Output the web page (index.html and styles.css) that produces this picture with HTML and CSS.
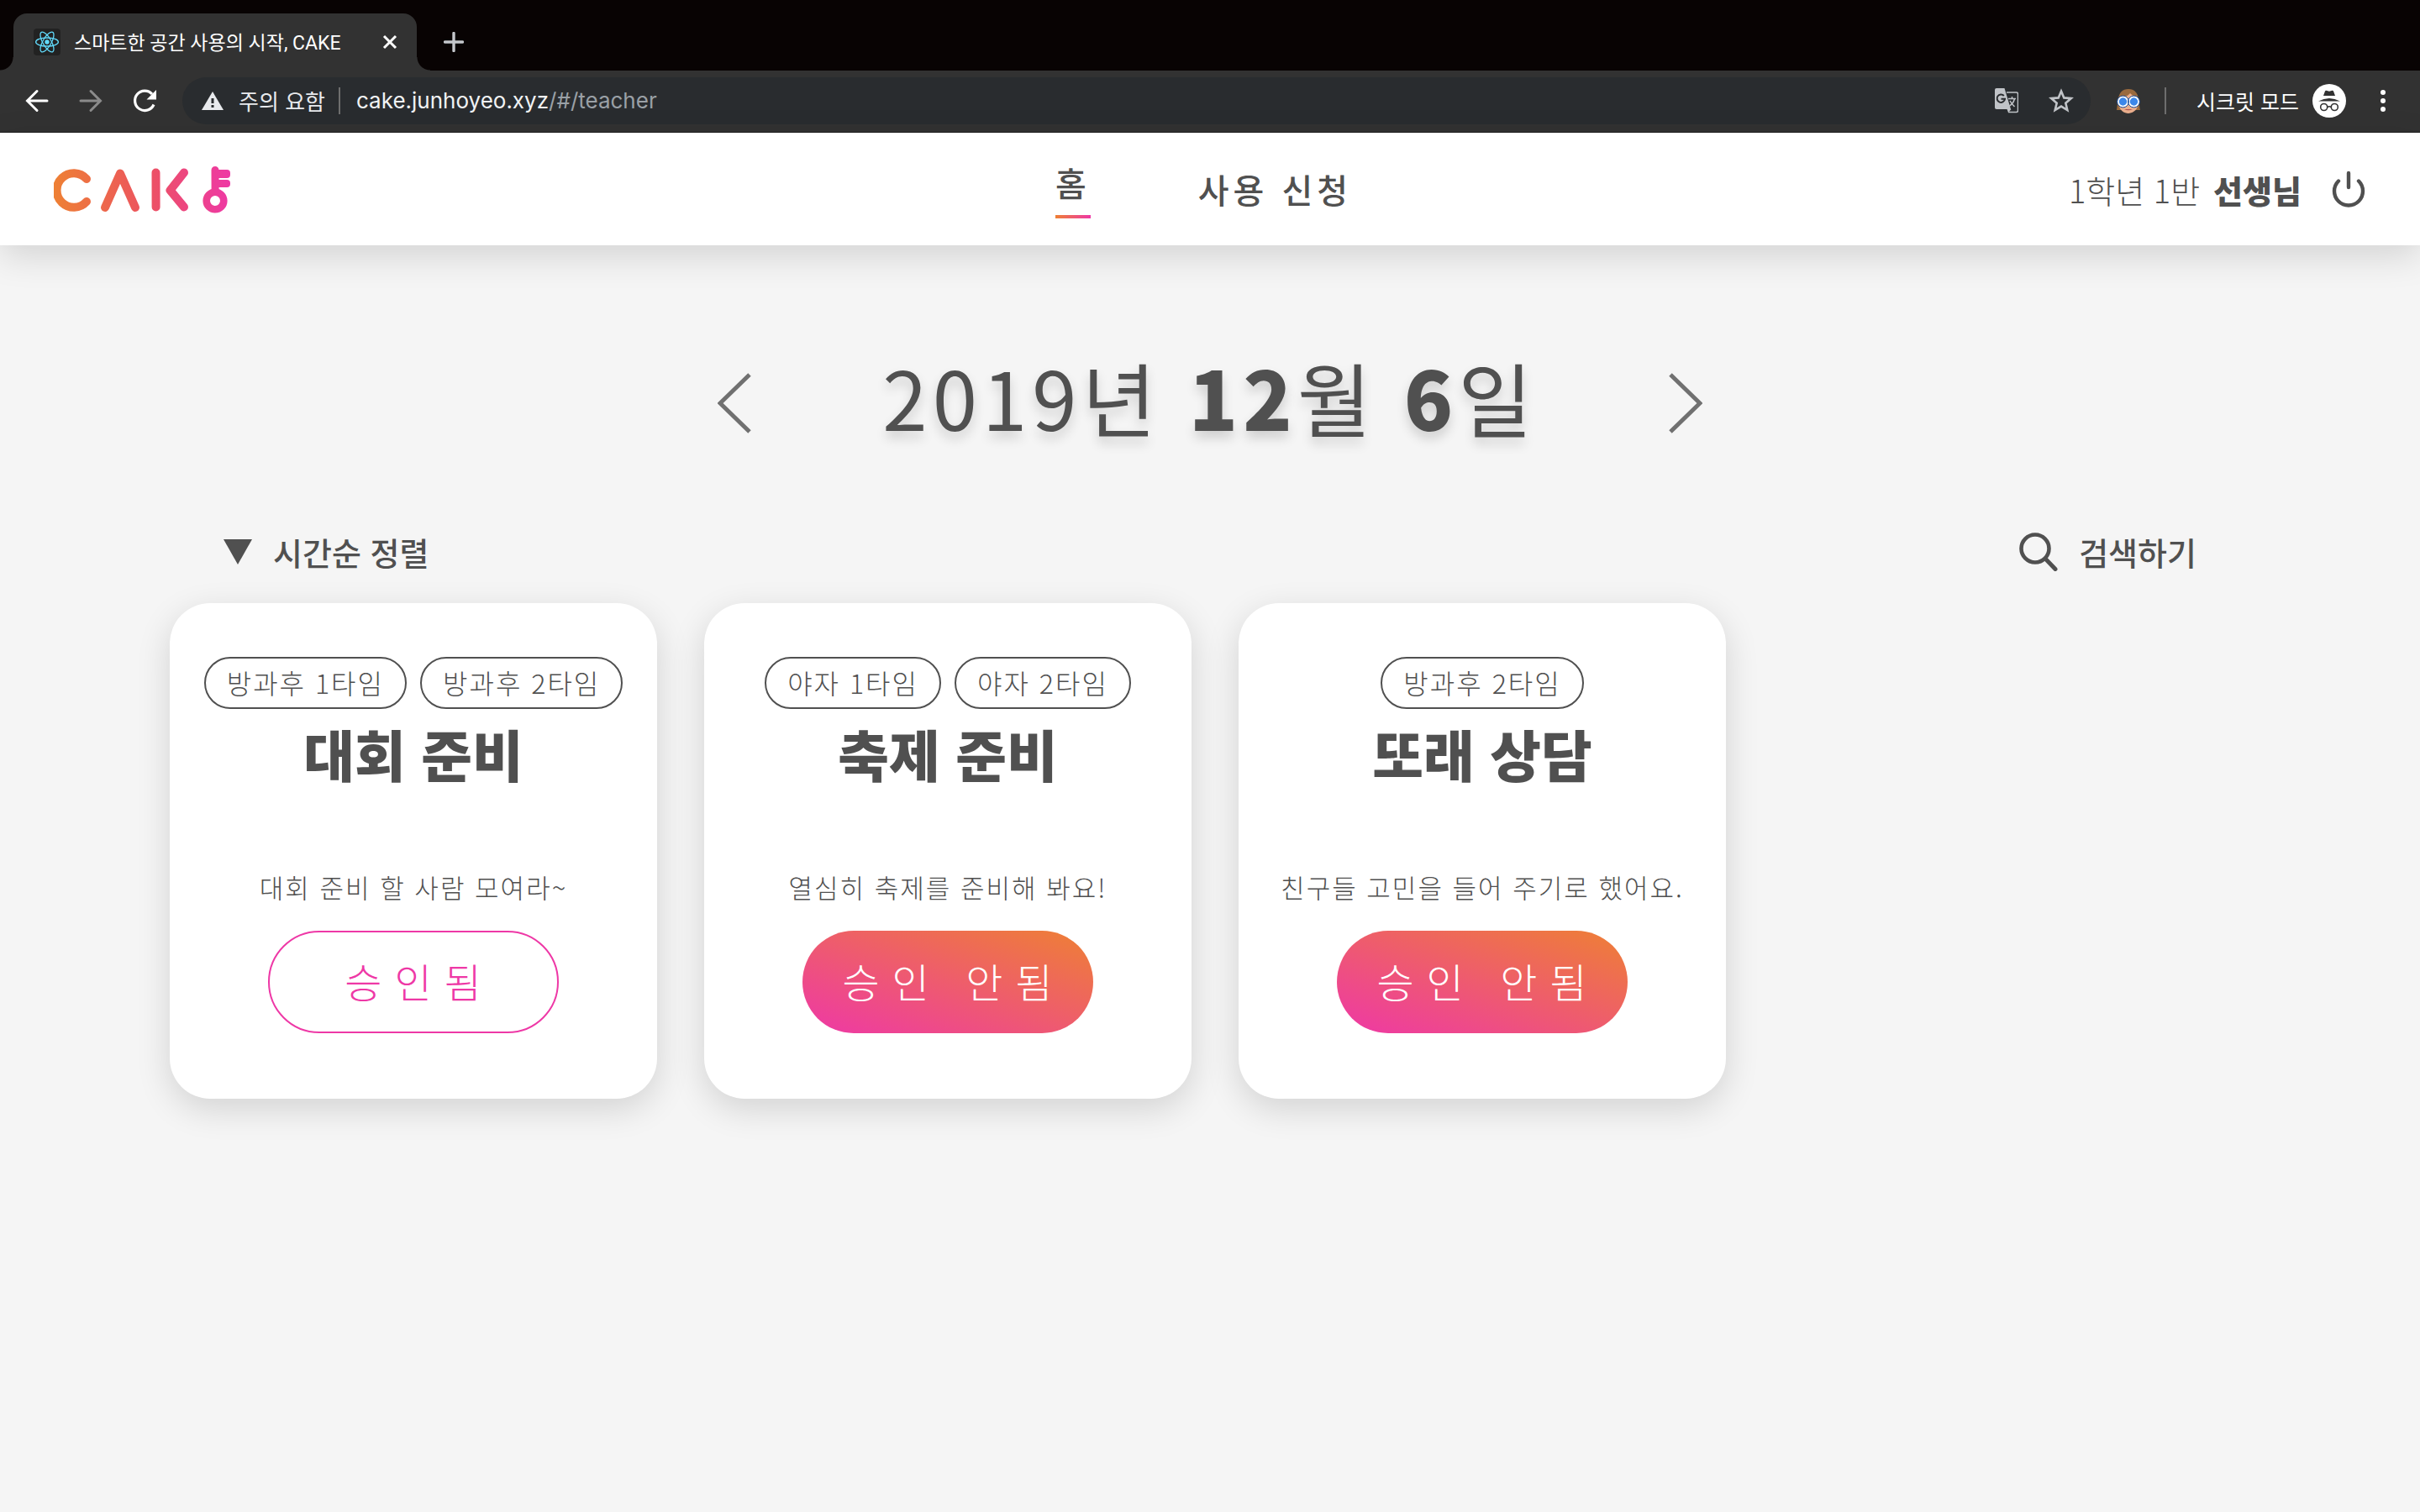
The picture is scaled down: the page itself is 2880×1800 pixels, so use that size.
FILE: index.html
```html
<!DOCTYPE html>
<html lang="ko">
<head>
<meta charset="utf-8">
<meta name="viewport" content="width=device-width, initial-scale=1">
<title>스마트한 공간 사용의 시작, CAKE</title>
<link rel="stylesheet" href="styles.css">
</head>
<body>
<div class="browser">
  <div class="tab-strip">
    <div class="tab">
      <svg class="favicon" viewBox="0 0 32 32" aria-hidden="true">
        <rect width="32" height="32" rx="4" fill="#222"/>
        <g fill="none" stroke="#61dafb" stroke-width="1.3">
          <ellipse cx="16" cy="16" rx="13.4" ry="5"/>
          <ellipse cx="16" cy="16" rx="13.4" ry="5" transform="rotate(60 16 16)"/>
          <ellipse cx="16" cy="16" rx="13.4" ry="5" transform="rotate(120 16 16)"/>
        </g>
        <circle cx="16" cy="16" r="2.7" fill="#61dafb"/>
      </svg>
      <span class="tab-title">스마트한 공간 사용의 시작, CAKE</span>
      <button class="icon-button" aria-label="탭 닫기">
        <svg width="18" height="18" viewBox="0 0 18 18"><path d="M2 2 16 16M16 2 2 16" stroke="#fff" stroke-width="3" fill="none"/></svg>
      </button>
    </div>
    <button class="icon-button" aria-label="새 탭">
      <svg width="24" height="24" viewBox="0 0 24 24"><path d="M12 1.500v21M1.500 12h21" stroke="#c4c7cc" stroke-width="3.400" stroke-linecap="round"/></svg>
    </button>
  </div>
  <div class="toolbar">
    <div class="history">
      <button class="icon-button" aria-label="뒤로">
        <svg width="32" height="32" viewBox="0 0 32 32"><path d="M28 16H5M16 4.500 4.500 16 16 27.500" fill="none" stroke="#fff" stroke-width="3" stroke-linecap="round"/></svg>
      </button>
      <button class="icon-button" aria-label="앞으로">
        <svg width="32" height="32" viewBox="0 0 32 32"><path d="M4 16h23M16 4.500 27.500 16 16 27.500" fill="none" stroke="#8b8b8b" stroke-width="3" stroke-linecap="round"/></svg>
      </button>
      <button class="icon-button" aria-label="새로고침">
        <svg width="32" height="32" viewBox="0 0 32 32"><path d="M27 20.500A11.700 11.700 0 1 1 25 8" fill="none" stroke="#fff" stroke-width="3.200"/><path d="M30 3v11.500h-11.500z" fill="#fff"/></svg>
      </button>
    </div>
    <div class="omnibox">
      <svg width="26" height="22" viewBox="0 0 26 22" aria-hidden="true"><path d="M13 0 26 22H0z" fill="#e8eaed"/><path d="M11.500 8h3v6h-3zM11.500 16h3v3h-3z" fill="#292c2f"/></svg>
      <span class="security">주의 요함</span>
      <span class="bar"></span>
      <span class="url">cake.junhoyeo.xyz<span class="url-path">/#/teacher</span></span>
      <button class="icon-button" aria-label="번역">
        <svg width="28" height="30" viewBox="0 0 28 30">
          <path d="M14 5h11.500a2 2 0 0 1 2 2v19.500a2 2 0 0 1-2 2H16" fill="none" stroke="#c0c3c7" stroke-width="1.500"/>
          <path d="M2 0h9.500L19 25H2a2 2 0 0 1-2-2V2a2 2 0 0 1 2-2z" fill="#c0c3c7"/>
          <path d="M14.500 25h5l-3.500 4z" fill="#c0c3c7"/>
          <path d="M10.800 9A4.700 4.700 0 1 0 12 12.800H7.500" fill="none" stroke="#292c2f" stroke-width="2"/>
          <path d="M16 12.500h9M20.500 10v2.500M23.500 12.500c-1 4-3.500 7-6 8.500M18 15c1.500 3 3.500 5 5.500 7" fill="none" stroke="#c0c3c7" stroke-width="1.500"/>
        </svg>
      </button>
      <button class="icon-button" aria-label="북마크">
        <svg width="30" height="30" viewBox="0 0 30 30"><path d="M15 3.500l3.300 7.900 8.500.7-6.500 5.600 2 8.300-7.300-4.400-7.300 4.400 2-8.300-6.500-5.600 8.500-.7z" fill="none" stroke="#c0c3c7" stroke-width="2.600"/></svg>
      </button>
    </div>
    <svg class="extension" width="28" height="30" viewBox="0 0 28 30" aria-hidden="true">
      <path d="M0 26C2 20-1 1 14 1s12 19 14 25z" fill="#9a6a3e"/>
      <path d="M3 11c6 0 11-2 13-5 2 2 5 4 9 5v9c0 6-6 10-11 10S3 26 3 20z" fill="#e9ae8c"/>
      <circle cx="7.500" cy="16" r="5.700" fill="#3c87ea" stroke="#fff" stroke-width="2"/>
      <circle cx="20.500" cy="16" r="5.700" fill="#3c87ea" stroke="#fff" stroke-width="2"/>
      <circle cx="7.500" cy="16" r="6.900" fill="none" stroke="#1d4f9c"/>
      <circle cx="20.500" cy="16" r="6.900" fill="none" stroke="#1d4f9c"/>
      <path d="M9 25q5 2.500 10 0z" fill="#b4534f"/>
    </svg>
    <span class="bar"></span>
    <div class="incognito">
      <span>시크릿 모드</span>
      <svg width="40" height="40" viewBox="0 0 40 40" aria-hidden="true">
        <circle cx="20" cy="20" r="20" fill="#fff"/>
        <path d="M15 8.500q.5-1 1.500-.7l3.500 1 3.500-1q1-.3 1.500.7L27 14H13z" fill="#323232"/>
        <path d="M7 20.500q13-7 26 0z" fill="#323232"/>
        <g fill="none" stroke="#323232" stroke-width="1.600"><circle cx="13.700" cy="27.500" r="4"/><circle cx="26.300" cy="27.500" r="4"/><path d="M17.700 27.500q2.300-1.500 4.600 0"/></g>
      </svg>
    </div>
    <button class="icon-button" aria-label="메뉴">
      <svg width="6" height="28" viewBox="0 0 6 28"><g fill="#fff"><circle cx="3" cy="4" r="3"/><circle cx="3" cy="14" r="3"/><circle cx="3" cy="24" r="3"/></g></svg>
    </button>
  </div>
</div>

<header class="header">
  <a class="logo" href="#/" aria-label="CAKE">
    <svg width="212" height="58" viewBox="0 -1 212 58">
      <defs><linearGradient id="brand" gradientUnits="userSpaceOnUse" x1="0" y1="0" x2="212" y2="0"><stop offset="0" stop-color="#ee8034"/><stop offset=".52" stop-color="#ec5360"/><stop offset="1" stop-color="#ee38a6"/></linearGradient></defs>
      <g fill="none" stroke="url(#brand)" stroke-width="10" stroke-linecap="round" stroke-linejoin="round">
        <path d="M39 16A20.300 20.300 0 1 0 39 43"/>
        <path d="M61 50 79 9.500 97 50"/>
        <path d="M121.500 8.500 121.600 49.500M155 8.500 138.500 29.500 155 49.500"/>
        <circle cx="192" cy="42" r="10.300" stroke-width="8.600"/>
        <path d="M192 5.500 192.100 30" stroke-width="9"/>
      </g>
      <path d="M192 5h14a4 4 0 0 1 4 4v2a4 4 0 0 1-4 4h-14zM192 17h14a4 4 0 0 1 4 4v1a4 4 0 0 1-4 4h-14z" fill="url(#brand)"/>
    </svg>
  </a>
  <nav class="nav">
    <a class="nav-link nav-link-active" href="#/teacher">홈</a>
    <a class="nav-link" href="#/apply">사용 신청</a>
  </nav>
  <div class="account">
    <span class="account-class">1학년 1반</span>
    <strong class="account-role">선생님</strong>
    <button class="icon-button" aria-label="로그아웃">
      <svg width="40" height="44" viewBox="0 0 40 44"><path d="M8 12.500A17 17 0 1 0 32 12.500M20 3v17" fill="none" stroke="#505050" stroke-width="4.400" stroke-linecap="round"/></svg>
    </button>
  </div>
</header>

<main class="page">
  <div class="date-picker">
    <button class="icon-button date-arrow" aria-label="이전 날">
      <svg width="40" height="72" viewBox="0 0 40 72"><path d="M38 2 3 36 38 70" fill="none" stroke="#707070" stroke-width="5"/></svg>
    </button>
    <h1 class="date">2019년 <b>12</b>월 <b>6</b>일</h1>
    <button class="icon-button date-arrow" aria-label="다음 날">
      <svg width="40" height="72" viewBox="0 0 40 72"><path d="M2 2 37 36 2 70" fill="none" stroke="#707070" stroke-width="5"/></svg>
    </button>
  </div>

  <div class="filters">
    <button class="filter">
      <svg width="34" height="30" viewBox="0 0 34 30"><path d="M0 0h34L17 30z" fill="#505050"/></svg>
      시간순 정렬
    </button>
    <button class="filter">
      <svg width="46" height="46" viewBox="0 0 46 46"><circle cx="19" cy="19" r="16.500" fill="none" stroke="#505050" stroke-width="4.600"/><path d="M31 31 43 43.500" stroke="#505050" stroke-width="5" stroke-linecap="round"/></svg>
      검색하기
    </button>
  </div>

  <section class="cards">
    <article class="card">
      <div class="tags"><span class="tag">방과후 1타임</span><span class="tag">방과후 2타임</span></div>
      <h2 class="card-title">대회 준비</h2>
      <p class="card-text">대회 준비 할 사람 모여라~</p>
      <button class="status status-approved">승인됨</button>
    </article>
    <article class="card">
      <div class="tags"><span class="tag">야자 1타임</span><span class="tag">야자 2타임</span></div>
      <h2 class="card-title">축제 준비</h2>
      <p class="card-text">열심히 축제를 준비해 봐요!</p>
      <button class="status">승인 안됨</button>
    </article>
    <article class="card">
      <div class="tags"><span class="tag">방과후 2타임</span></div>
      <h2 class="card-title">또래 상담</h2>
      <p class="card-text">친구들 고민을 들어 주기로 했어요.</p>
      <button class="status">승인 안됨</button>
    </article>
  </section>
</main>
</body>
</html>
```

FILE: styles.css
```css
* {
  box-sizing: border-box;
}

body {
  margin: 0;
  min-height: 100vh;
  background: #f5f5f5;
  color: #505050;
  font-family: "Noto Sans CJK KR", sans-serif;
}

button {
  padding: 0;
  border: 0;
  background: none;
  color: inherit;
  font: inherit;
  cursor: pointer;
}

svg {
  display: block;
  flex: none;
}

.icon-button {
  flex: none;
}

/* Browser window */

.browser {
  color: #fff;
  font-family: Inter, "Noto Sans CJK KR", sans-serif;
}

.tab-strip {
  display: flex;
  align-items: center;
  gap: 32px;
  height: 84px;
  padding: 16px 16px 0;
  background: #080303;
}

.tab {
  position: relative;
  display: flex;
  align-items: center;
  width: 480px;
  height: 68px;
  padding: 0 23px 0 24px;
  border-radius: 16px 16px 0 0;
  background: #323232;
}

.tab::before,
.tab::after {
  content: "";
  position: absolute;
  bottom: 0;
  width: 16px;
  height: 16px;
}

.tab::before {
  right: 100%;
  background: radial-gradient(circle at 0 0, transparent 15px, #323232 16px);
}

.tab::after {
  left: 100%;
  background: radial-gradient(circle at 100% 0, transparent 15px, #323232 16px);
}

.favicon {
  width: 32px;
  height: 32px;
}

.tab-title {
  flex: 1;
  margin-left: 16px;
  padding-bottom: 2px;
  font-family: Roboto, "Noto Sans CJK KR", sans-serif;
  font-size: 23px;
  font-weight: 400;
  white-space: nowrap;
}

.toolbar {
  display: flex;
  align-items: center;
  height: 74px;
  padding: 0 41px 2px 28px;
  border-bottom: 1px solid #1f1f1f;
  background: #323232;
}

.history {
  display: flex;
  gap: 32px;
}

.omnibox {
  display: flex;
  flex: 1;
  align-items: center;
  height: 56px;
  margin: 0 31px 0 29px;
  padding: 0 20px 0 23px;
  border-radius: 28px;
  background: #292c2f;
}

.security {
  margin: 0 16px 0 18px;
  color: #e8eaed;
  font-size: 26px;
}

.bar {
  width: 2px;
  height: 32px;
  background: #6e6e6e;
}

.url {
  flex: 1;
  margin-left: 19px;
  color: #f1f3f4;
  font-size: 26px;
}

.url-path {
  color: #9aa0a6;
}

.omnibox .icon-button + .icon-button {
  margin-left: 36px;
}

.extension {
  margin-right: 29px;
}

.incognito {
  display: flex;
  align-items: center;
  gap: 16px;
  margin: 0 41px 0 36px;
  font-size: 25px;
}

/* Site header */

.header {
  position: relative;
  display: grid;
  grid-template-columns: 1fr auto 1fr;
  align-items: center;
  height: 134px;
  padding: 0 65px 0 64px;
  background: #fff;
  box-shadow: 0 12px 40px rgba(0, 0, 0, 0.14);
}

.logo {
  justify-self: start;
}

.nav {
  display: flex;
  align-items: center;
  gap: 128px;
  padding-right: 14px;
}

.nav-link {
  color: inherit;
  font-size: 40px;
  font-weight: 500;
  line-height: 54px;
  letter-spacing: 5px;
  text-decoration: none;
}

.nav-link-active::after {
  content: "";
  display: block;
  height: 4px;
  margin-top: 12px;
  background: linear-gradient(90deg, #ee8034, #ee38a6);
}

.account {
  display: flex;
  align-items: center;
  justify-self: end;
  font-size: 38px;
}

.account-class {
  font-weight: 300;
}

.account-role {
  margin: 0 36px 0 16px;
  font-weight: 900;
}

/* Date */

.page {
  padding: 110px 190px 64px;
}

.date-picker {
  display: flex;
  align-items: center;
  justify-content: space-between;
  max-width: 1172px;
  margin: 0 auto;
}

.date-arrow {
  margin-top: 16px;
}

.date {
  margin: 0;
  font-size: 96px;
  font-weight: 400;
  line-height: 140px;
  letter-spacing: 6px;
  text-shadow: 0 8px 14px rgba(0, 0, 0, 0.16);
}

.date b {
  font-weight: 900;
}

/* Filters */

.filters {
  display: flex;
  justify-content: space-between;
  margin: 87px 76px 33px;
}

.filter {
  display: flex;
  align-items: center;
  gap: 25px;
  font-size: 38px;
  font-weight: 500;
  line-height: 56px;
}

/* Cards */

.cards {
  display: grid;
  grid-template-columns: repeat(4, 1fr);
  gap: 56px;
  padding-left: 12px;
}

.card {
  display: flex;
  flex-direction: column;
  align-items: center;
  padding: 64px 20px 78px;
  border-radius: 48px;
  background: #fff;
  box-shadow: 0 12px 40px rgba(0, 0, 0, 0.14);
}

.tags {
  display: flex;
  gap: 16px;
}

.tag {
  padding: 0 25px 2px;
  border: 2px solid #505050;
  border-radius: 31px;
  font-size: 32px;
  font-weight: 300;
  line-height: 56px;
  letter-spacing: 2px;
  white-space: nowrap;
}

.card-title {
  margin: 0;
  font-size: 66px;
  font-weight: 900;
  line-height: 104px;
}

.card-text {
  margin: 86px 0 30px;
  font-size: 31px;
  font-weight: 300;
  line-height: 44px;
  letter-spacing: 2px;
  white-space: nowrap;
}

.status {
  width: 346px;
  height: 122px;
  padding-bottom: 4px;
  border-radius: 61px;
  background: linear-gradient(to top right, #ee38a6, #ee8034);
  color: #fff;
  font-size: 48px;
  font-weight: 300;
  letter-spacing: 15px;
  text-indent: 14px;
}

.status-approved {
  border: 2px solid #ee38a6;
  background: #fff;
  color: #ee38a6;
}
```
